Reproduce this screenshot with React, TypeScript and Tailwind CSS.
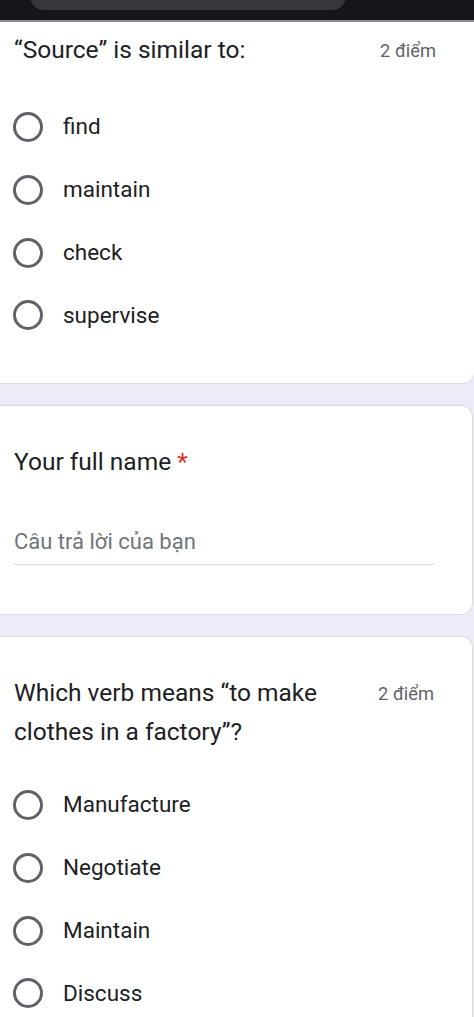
import React from "react";

const font = { fontFamily: "Roboto, 'Noto Sans', Arial, sans-serif" };

function Radio({ label }: { label: string }) {
  return (
    <div className="flex items-center h-[62.7px]">
      <span className="ml-[13px] w-[30px] h-[30px] rounded-full border-[3px] border-[#5f6368] shrink-0" />
      <span className="ml-[20px] text-[22.5px] text-[#202124]">{label}</span>
    </div>
  );
}

function Card({ children, className = "" }: { children: React.ReactNode; className?: string }) {
  return (
    <div
      className={
        "bg-white border-y border-r border-[#dadce0] rounded-r-[12px] mr-[1px] " + className
      }
    >
      {children}
    </div>
  );
}

export default function App() {
  return (
    <div className="w-[474px] min-h-[1017px] bg-[#eeebf8] overflow-hidden" style={font}>
      {/* top bar */}
      <div className="h-[22px] bg-[#16161a] relative border-b-[2px] border-[#8e8e90]">
        <div className="absolute left-[30px] top-[-20px] w-[316px] h-[30px] rounded-[14px] bg-[#38383c]" />
      </div>

      {/* question 1 */}
      <div className="bg-white h-[362px] border-b border-[#dadce0] rounded-br-[12px]">
        <div className="flex items-start justify-between pl-[14px] pr-[38px] pt-[12px]">
          <span className="text-[24.5px] text-[#202124] leading-[32px]">“Source” is similar to:</span>
          <span className="text-[18.3px] text-[#5f6368] leading-[32px] mt-[1px]">2 điểm</span>
        </div>
        <div className="mt-[29px]">
          {["find", "maintain", "check", "supervise"].map((o) => (
            <Radio key={o} label={o} />
          ))}
        </div>
      </div>

      <div className="h-[21px]" />

      {/* full name */}
      <Card className="h-[210px] pt-[40px]">
        <div className="pl-[14px] text-[24.5px] text-[#202124] leading-[32px]">
          Your full name <span className="text-[#d93025]">*</span>
        </div>
        <div className="mt-[50px] ml-[14px] mr-[38px] border-b border-[#dadce0] pb-[8px]">
          <span className="text-[22px] text-[#70757a] leading-[28px]">Câu trả lời của bạn</span>
        </div>
      </Card>

      <div className="h-[21px]" />

      {/* question 3 */}
      <Card className="border-b-0 rounded-br-none pt-[36px]">
        <div className="flex items-start justify-between pl-[14px] pr-[38px]">
          <span className="text-[24.5px] text-[#202124] leading-[39px] w-[340px]">
            Which verb means “to make clothes in a factory”?
          </span>
          <span className="text-[18.3px] text-[#5f6368] leading-[39px] mt-[1px]">2 điểm</span>
        </div>
        <div className="mt-[23px] pb-[40px]">
          {["Manufacture", "Negotiate", "Maintain", "Discuss"].map((o) => (
            <Radio key={o} label={o} />
          ))}
        </div>
      </Card>
    </div>
  );
}
